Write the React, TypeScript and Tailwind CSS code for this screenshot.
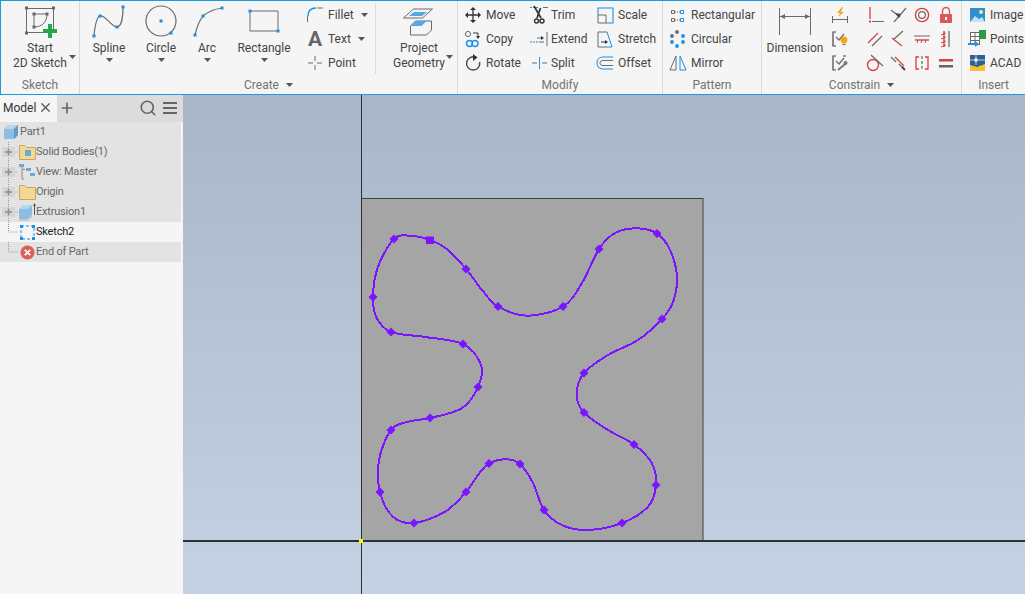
import type { ReactNode } from 'react';
import { Plus, Search, X } from 'lucide-react';

const BLUE = '#1b90e8';
const GRAY = '#6b6b6b';
const RED = '#d8403c';

const Caret = ({ className = '' }: { className?: string }) => (
  <svg width="7" height="4" viewBox="0 0 7 4" className={className}>
    <path d="M0 0h7L3.5 4z" fill="#555" />
  </svg>
);

// big ribbon icons are drawn in screen coordinates, cx = centre of the button
const BigIcon = ({ cx, children }: { cx: number; children: ReactNode }) => (
  <svg width="44" height="38" viewBox={`${cx - 22} 3 44 38`} fill="none" className="shrink-0">
    {children}
  </svg>
);

const Small = ({ children }: { children: ReactNode }) => (
  <svg width="20" height="20" viewBox="0 0 20 20" fill="none" className="shrink-0">
    {children}
  </svg>
);

const H = ({ x, y, s = 3, c = BLUE }: { x: number; y: number; s?: number; c?: string }) => (
  <rect x={x - s / 2} y={y - s / 2} width={s} height={s} fill={c} />
);

const BigButton = ({ w, icon, lines, caret, side }: { w: string; icon: ReactNode; lines: string[]; caret?: boolean; side?: string }) => (
  <div className={`${w} flex flex-col items-center shrink-0`}>
    {icon}
    <div className="relative flex flex-col items-center text-[12px] leading-[15px] text-[#444]">
      {lines.map((l) => (
        <span key={l} className="whitespace-nowrap">{l}</span>
      ))}
      {side && <Caret className={`absolute top-[14px] ${side}`} />}
    </div>
    {caret && <Caret className="mt-[2px]" />}
  </div>
);

const Row = ({ icon, label, iconW = 'w-5', gap = 'ml-[3px]', right }: { icon: ReactNode; label: string; iconW?: string; gap?: string; right?: ReactNode }) => (
  <div className="h-6 flex items-center">
    <div className={`${iconW} flex justify-center shrink-0`}>{icon}</div>
    <span className={`${gap} text-[12px] text-[#444] whitespace-nowrap`}>{label}</span>
    {right}
  </div>
);

const Panel = ({ w, label, arrow, border = true, children }: { w: string; label: string; arrow?: boolean; border?: boolean; children: ReactNode }) => (
  <section className={`${w} shrink-0 flex flex-col pt-[2px] ${border ? 'border-r border-[#d9d9d9]' : ''}`}>
    <div className="h-[72px] flex">{children}</div>
    <div className="h-[20px] pt-[1px] flex items-center justify-center gap-[7px] text-[12px] text-[#737373]">
      <span>{label}</span>
      {arrow && <Caret />}
    </div>
  </section>
);

/* ---------- small ribbon icons ---------- */
const icons: Record<string, ReactNode> = {
  fillet: (
    <>
      <path d="M2.5 17v-6" stroke={GRAY} />
      <path d="M3 11C3 6 6 3 11 3" stroke={BLUE} strokeWidth="1.4" />
      <path d="M12 3h6" stroke={GRAY} />
    </>
  ),
  point: <path d="M10 3v5M10 12v5M3 10h5M12 10h5" stroke={GRAY} />,
  move: (
    <>
      <path d="M10 3v14M3 10h14" stroke="#333" strokeWidth="1.3" />
      <path d="M10 2l-3 3h6zM10 18l-3-3h6zM2 10l3-3v6zM18 10l-3-3v6z" fill="#333" />
    </>
  ),
  copy: (
    <>
      <circle cx="5" cy="5" r="2.6" stroke={GRAY} />
      <path d="M10 4h5v4" stroke="#333" />
      <path d="M13 7l2 3 2-3z" fill="#333" />
      <circle cx="6.5" cy="14.5" r="3" stroke={BLUE} strokeWidth="1.4" />
      <circle cx="12" cy="14.5" r="3" stroke={BLUE} strokeWidth="1.4" />
    </>
  ),
  rotate: (
    <>
      <path d="M13 4.5A6.6 6.6 0 1 0 16.6 9" stroke="#444" strokeWidth="1.4" />
      <path d="M10 1v7l4.5-3.5z" fill="#333" />
    </>
  ),
  trim: (
    <>
      <path d="M1 2.5h9" stroke={BLUE} strokeDasharray="2 1" />
      <path d="M14 2.5h5" stroke={GRAY} />
      <path d="M5 1l7 12M11.5 3L8 13" stroke="#333" strokeWidth="1.7" />
      <circle cx="7.5" cy="16" r="2" stroke="#333" strokeWidth="1.4" />
      <circle cx="13" cy="16" r="2" stroke="#333" strokeWidth="1.4" />
    </>
  ),
  extend: (
    <>
      <path d="M1 13h8" stroke={BLUE} strokeDasharray="2 1" />
      <path d="M8 9h6M18 3v14M10 13h5" stroke={GRAY} />
      <path d="M12 7l3 2-3 2z" fill="#333" />
    </>
  ),
  split: (
    <>
      <path d="M3 10h5M13 10h5" stroke={GRAY} />
      <path d="M10.5 4v12" stroke={BLUE} />
    </>
  ),
  scale: (
    <>
      <path d="M3 10V3h15v15h-7" stroke={BLUE} strokeWidth="1.1" />
      <path d="M3 10h8v8H3z" stroke={GRAY} />
    </>
  ),
  stretch: (
    <>
      <path d="M12 3H3v15h9" stroke={GRAY} />
      <path d="M12 3l5 15h-5" stroke={BLUE} />
      <path d="M6 13h5" stroke="#333" />
      <path d="M10 11l3 2-3 2z" fill="#333" />
    </>
  ),
  offset: (
    <>
      <path d="M18 4H8C4 4 2 7 2 10s2 6 6 6h10" stroke={BLUE} strokeWidth="1.1" />
      <path d="M18 7.5H8c-2 0-3 1-3 2.5s1 2.5 3 2.5h10" stroke={GRAY} />
    </>
  ),
  rect: (
    <>
      <path d="M3.5 5.5h3v3h-3zM3.5 13.5h3v3h-3z" stroke={GRAY} />
      <path d="M12.5 5.5h3v3h-3zM12.5 13.5h3v3h-3z" stroke={BLUE} />
      <path d="M7 7h5M7 15h5" stroke={GRAY} strokeDasharray="1 1" />
    </>
  ),
  circular: (
    <>
      {[[9, 3], [4, 7], [15, 7], [4, 13], [15, 13], [9, 17]].map(([x, y], i) => (
        <circle key={i} cx={x} cy={y} r="1.9" fill={i < 2 ? GRAY : BLUE} />
      ))}
    </>
  ),
  mirror: (
    <>
      <path d="M8 3v14H2z" stroke={GRAY} />
      <path d="M12 3v14h6z" stroke={BLUE} />
    </>
  ),
  image: (
    <>
      <rect x="3" y="3" width="15" height="14" fill="#2f8fd0" />
      <path d="M3 17l5-6 4 3 3-2 3 5z" fill="#bfe0f5" />
      <circle cx="14" cy="7" r="2" fill="#f6e7a0" />
    </>
  ),
  points: (
    <>
      <rect x="3.5" y="3.5" width="9" height="12" fill="#fff" stroke={GRAY} />
      <path d="M3 7.5h9M3 11.5h9M8 3v12" stroke={GRAY} />
      <rect x="12" y="1" width="7" height="9" fill="#2e9a4a" />
      <path d="M1 15h9" stroke={BLUE} strokeWidth="2" />
      <path d="M8 12l4 3-4 3z" fill={BLUE} />
    </>
  ),
  acad: (
    <>
      <rect x="3" y="2" width="15" height="16" fill="#2f5f94" />
      <path d="M3 18v-6l7 2 8-3v7z" fill="#f2c230" />
      <path d="M3 7h15M9 2v10" stroke="#fff" strokeWidth=".7" />
      <rect x="7.5" y="5.5" width="3" height="3" fill="#fff" />
    </>
  ),
};

const constrainCol1: ReactNode[] = [
  <>
    <path d="M2.5 11v7M17.5 11v7M2 14.5h16" stroke={GRAY} />
    <path d="M12 2L7 8h3l-2 4 6-5h-3l2-5z" fill="#f0a818" />
  </>,
  <>
    <path d="M6 3H3v14h3" stroke="#444" strokeWidth="1.2" />
    <path d="M6 8l3 3 5-6" stroke={GRAY} strokeWidth="1.2" />
    <circle cx="14" cy="11" r="3.4" fill="#f0a818" />
    <path d="M12.5 15.5h3" stroke="#888" strokeWidth="1.4" />
  </>,
  <>
    <path d="M6 3H3v14h3M16 3h-3" stroke="#444" strokeWidth="1.2" />
    <path d="M6 8l3 3 5-6" stroke={GRAY} strokeWidth="1.2" />
    <path d="M8 17l7-6" stroke="#777" strokeWidth="2" />
    <circle cx="15.5" cy="10" r="2" fill="#777" />
  </>,
];

const constrainGrid: ReactNode[] = [
  <>
    <path d="M5 2v12" stroke={RED} strokeWidth="1.3" />
    <path d="M7 16.5h12" stroke={GRAY} />
    <rect x="4" y="15.5" width="2" height="2" fill={RED} />
  </>,
  <>
    <path d="M3 5l9 7" stroke={GRAY} strokeWidth="1.2" />
    <path d="M6 17L18 3" stroke={GRAY} strokeWidth="1.2" />
    <path d="M7 8l6 1-2 4z" fill="#444" />
  </>,
  <>
    <circle cx="10" cy="10" r="6.6" stroke={RED} strokeWidth="1.4" />
    <circle cx="10" cy="10" r="3.4" stroke={GRAY} strokeWidth="1.2" />
  </>,
  <>
    <rect x="4" y="9" width="12" height="9" rx="1" fill="#d9585a" />
    <path d="M6.5 9V6a3.5 3.5 0 0 1 7 0v3" stroke="#d9585a" strokeWidth="1.4" />
    <rect x="9" y="12" width="2" height="3" fill="#fff" />
  </>,
  <>
    <path d="M3 14L13 4" stroke={RED} strokeWidth="1.3" />
    <path d="M7 17L17 7" stroke={GRAY} strokeWidth="1.3" />
  </>,
  <>
    <path d="M4 9l10 8" stroke={RED} strokeWidth="1.3" />
    <path d="M6 10l9-8" stroke={GRAY} strokeWidth="1.3" />
  </>,
  <>
    <path d="M2 7h16" stroke={GRAY} />
    <path d="M3 11h14" stroke={RED} strokeWidth="1.4" />
    <path d="M5 14l1-3M9 14l1-3M13 14l1-3" stroke={RED} />
  </>,
  <>
    <path d="M13 2v16" stroke={GRAY} strokeWidth="1.3" />
    <path d="M8 2v16" stroke={RED} strokeWidth="1.4" />
    <path d="M5 6l5-2M5 10l5-2M5 14l5-2M5 18l5-2" stroke={RED} />
  </>,
  <>
    <circle cx="8" cy="12" r="5.5" stroke={RED} strokeWidth="1.4" />
    <path d="M6 2l12 11" stroke={GRAY} strokeWidth="1.3" />
  </>,
  <>
    <path d="M3 4l5 5M11 11l5 5" stroke={GRAY} strokeWidth="1.3" />
    <path d="M7 4l9 9" stroke={RED} strokeWidth="1.3" />
    <path d="M14 14l3 3" stroke="#444" strokeWidth="1.8" />
  </>,
  <>
    <path d="M7 4H4v12h3M13 4h3v12h-3" stroke={RED} strokeWidth="1.3" />
    <path d="M10 3v3M10 8v3M10 13v3" stroke={GRAY} strokeWidth="1.2" />
  </>,
  <>
    <rect x="3" y="6" width="14" height="2.5" fill={RED} />
    <rect x="3" y="12" width="14" height="2.5" fill="#666" />
  </>,
];

/* ---------- browser tree ---------- */
const Cube = () => (
  <svg width="16" height="16" viewBox="0 0 16 16">
    <path d="M1 5l4-4h10v10l-4 4H1z" fill="#8dbde0" />
    <path d="M5 1h10l-4 4H1z" fill="#b5d6ee" />
    <path d="M11 5l4-4v10l-4 4z" fill="#5f9ccb" />
  </svg>
);

const Folder = ({ cube }: { cube?: boolean }) => (
  <svg width="17" height="15" viewBox="0 0 17 15">
    <path d="M.5 14.5V.5h5l2 2h9v12z" fill="#f2d894" stroke="#c8a860" />
    {cube && <rect x="6" y="5" width="6" height="6" fill="#6ea8d6" />}
  </svg>
);

const treeIcons: Record<string, ReactNode> = {
  folderCube: <Folder cube />,
  folder: <Folder />,
  view: (
    <svg width="17" height="16" viewBox="0 0 17 16" fill="none">
      <rect x="0" y="0" width="5" height="3" fill="#6ea8d6" />
      <path d="M3 3v5" stroke="#888" strokeDasharray="2 1" />
      <path d="M3 8v7h2M6 5.5H3" stroke="#888" />
      <rect x="7" y="4" width="5" height="3" fill="#6ea8d6" />
      <rect x="11" y="9" width="5" height="3" fill="#6ea8d6" />
    </svg>
  ),
  extrusion: (
    <svg width="17" height="18" viewBox="0 0 17 18" fill="none">
      <path d="M0 6l4-4h9v10l-4 4H0z" fill="#8dbde0" />
      <path d="M4 2h9L9 6H0z" fill="#b5d6ee" />
      <path d="M0 16h9l4-4v2l-4 4H0z" fill="#c8c8c8" />
      <path d="M15.5 12V2" stroke="#555" />
      <path d="M14 3l1.5-3L17 3z" fill="#555" />
    </svg>
  ),
  sketch: (
    <svg width="15" height="15" viewBox="0 0 15 15" fill="none">
      <rect x="1" y="1" width="13" height="13" stroke={BLUE} strokeDasharray="3 2" />
      <path d="M0 0h3v3H0zM12 0h3v3h-3zM0 12h3v3H0zM12 12h3v3h-3z" fill={BLUE} />
    </svg>
  ),
  end: (
    <svg width="15" height="15" viewBox="0 0 15 15">
      <circle cx="7.5" cy="7.5" r="7" fill="#d9605c" />
      <path d="M4.8 4.8l5.4 5.4M10.2 4.8l-5.4 5.4" stroke="#fff" strokeWidth="1.8" />
    </svg>
  ),
};

const treeRows = [
  { label: 'Solid Bodies(1)', icon: 'folderCube', plus: true },
  { label: 'View: Master', icon: 'view', plus: true },
  { label: 'Origin', icon: 'folder', plus: true },
  { label: 'Extrusion1', icon: 'extrusion', plus: true },
  { label: 'Sketch2', icon: 'sketch', active: true },
  { label: 'End of Part', icon: 'end', last: true },
];

const TreeGutter = ({ plus, last }: { plus?: boolean; last?: boolean }) => (
  <svg width="18" height="20" viewBox="0 0 18 20" fill="none" className="shrink-0">
    <path d={last ? 'M8.5 0v10H18' : 'M8.5 0v20M8.5 10H18'} stroke="#999" strokeDasharray="1 1" />
    {plus && (
      <>
        <rect x="2" y="5" width="13" height="10" fill="#d6d6d6" />
        <path d="M8.5 6.5v7M5 10h7" stroke="#8c8c8c" strokeWidth="1.5" />
      </>
    )}
  </svg>
);

/* ---------- sketch profile on the canvas ---------- */
// x, y, and whether the point carries a fit-point marker
const profile: [number, number, boolean][] = [
  [430, 240, false], [448, 250, false], [466, 269, true], [482, 290, false], [498, 306.5, true],
  [528, 315.7, false], [563, 306.5, true], [582, 283, false], [599, 249, true], [615, 233, false],
  [637, 228.3, false], [657, 233.5, true], [670, 250, false], [677, 277, false], [673, 302, false],
  [662, 319, true], [638, 340, false], [608, 355, false], [584, 373, true], [576.7, 395, false],
  [584, 412.5, true], [608, 430, false], [634, 444.5, true], [651.7, 463, false], [656, 485, true],
  [648, 506.7, false], [622, 523, true], [588, 530, false], [561.7, 525, false], [544, 510, true],
  [533, 483, false], [520, 464, true], [506.7, 459.3, false], [489, 463.5, true], [478, 475, false],
  [466, 492, true], [445, 511.7, false], [414, 523, true], [393, 516.7, false], [380, 492, true],
  [379, 460, false], [391, 430, true], [408, 421.7, false], [430, 418, true], [461.7, 408.3, false],
  [478, 387, true], [481, 365, false], [463, 344, true], [425, 337, false], [391, 332, true],
  [376.7, 318, false], [373, 297, true], [378, 266.7, false], [394, 239, true], [410, 235.7, false],
];

// closed catmull-rom through the points
const splinePath = () => {
  const n = profile.length;
  let d = `M${profile[0][0]} ${profile[0][1]}`;
  for (let i = 0; i < n; i++) {
    const p0 = profile[(i + n - 1) % n];
    const p1 = profile[i];
    const p2 = profile[(i + 1) % n];
    const p3 = profile[(i + 2) % n];
    const c1x = p1[0] + (p2[0] - p0[0]) / 6;
    const c1y = p1[1] + (p2[1] - p0[1]) / 6;
    const c2x = p2[0] - (p3[0] - p1[0]) / 6;
    const c2y = p2[1] - (p3[1] - p1[1]) / 6;
    d += `C${c1x} ${c1y} ${c2x} ${c2y} ${p2[0]} ${p2[1]}`;
  }
  return d + 'Z';
};

const Ribbon = () => (
  <header className="h-[95px] shrink-0 flex bg-[#f5f5f5] border border-[#1b9be0] border-r-0">
    <Panel w="w-[79px]" label="Sketch">
      <BigButton
        w="w-full"
        lines={['Start', '2D Sketch']}
        side="right-[-9px]"
        icon={
          <BigIcon cx={39}>
            <path d="M25.5 8.5h27v24h-27z" stroke={GRAY} />
            <path d="M33 14v13M33 14h13c0 7-4 13-13 13" stroke={GRAY} />
            <H x={25.5} y={8} c="#666" />
            <H x={52.5} y={8} c="#666" />
            <H x={25.5} y={33} c="#666" />
            <H x={33} y={14} c="#666" />
            <H x={46} y={14} c="#666" />
            <H x={33} y={27} c="#666" />
            <path d="M47 24h4v5h5v4h-5v5h-4v-5h-5v-4h5z" fill="#22a84a" />
          </BigIcon>
        }
      />
    </Panel>

    <Panel w="w-[378px]" label="Create" arrow>
      <div className="flex w-full">
        <BigButton
          w="w-[46px] ml-[6px]"
          lines={['Spline']}
          caret
          icon={
            <BigIcon cx={109}>
              <path d="M94 36C95 25 97 17 100 16C106 15 111 27 117 27C121 27 123 18 123 7" stroke={GRAY} strokeWidth="1.2" />
              <H x={94} y={36} />
              <H x={100} y={16} />
              <H x={117} y={27} />
              <H x={123} y={7} />
            </BigIcon>
          }
        />
        <BigButton
          w="w-[46px] ml-[6px]"
          lines={['Circle']}
          caret
          icon={
            <BigIcon cx={161}>
              <circle cx="161" cy="21" r="15" stroke={GRAY} strokeWidth="1.2" />
              <H x={161} y={21} />
              <H x={171} y={33} />
            </BigIcon>
          }
        />
        <BigButton
          w="w-[40px] ml-[3px]"
          lines={['Arc']}
          caret
          icon={
            <BigIcon cx={207}>
              <path d="M195 35C197 26 200 20 203 16C209 11 215 9 222 8" stroke={GRAY} strokeWidth="1.2" />
              <H x={195} y={35} />
              <H x={203} y={16} />
              <H x={222} y={8} />
            </BigIcon>
          }
        />
        <BigButton
          w="w-[60px] ml-[7px]"
          lines={['Rectangle']}
          caret
          icon={
            <BigIcon cx={264}>
              <path d="M250 11h28v20h-28z" stroke={GRAY} />
              <H x={250} y={11} />
              <H x={278} y={31} />
            </BigIcon>
          }
        />
        <div className="ml-[11px] w-[70px] shrink-0">
          <Row icon={<Small>{icons.fillet}</Small>} label="Fillet" right={<Caret className="ml-[7px]" />} />
          <Row
            icon={<span className="text-[21px] leading-none font-bold text-[#666]">A</span>}
            label="Text"
            right={<Caret className="ml-[7px]" />}
          />
          <Row icon={<Small>{icons.point}</Small>} label="Point" />
        </div>
        <div className="w-px h-[71px] bg-[#dcdcdc] shrink-0" />
        <BigButton
          w="w-[70px] ml-[8px]"
          lines={['Project', 'Geometry']}
          side="right-[-8px]"
          icon={
            <BigIcon cx={419}>
              <path d="M403.5 18l10-9h19l-10 9z" stroke={GRAY} />
              <path d="M409 16l5-4h13l-5 4z" fill="#55a8e6" />
              <path d="M410.5 26l5-5h16v9l-5 5h-16z" fill="#f5f5f5" stroke={GRAY} />
              <path d="M410.5 26l5-5h11l-5 5z" fill="#55a8e6" />
            </BigIcon>
          }
        />
      </div>
    </Panel>

    <Panel w="w-[205px]" label="Modify">
      <div className="flex ml-[5px]">
        <div className="w-[66px]">
          <Row icon={<Small>{icons.move}</Small>} label="Move" />
          <Row icon={<Small>{icons.copy}</Small>} label="Copy" />
          <Row icon={<Small>{icons.rotate}</Small>} label="Rotate" />
        </div>
        <div className="w-[66px]">
          <Row icon={<Small>{icons.trim}</Small>} label="Trim" gap="ml-[2px]" />
          <Row icon={<Small>{icons.extend}</Small>} label="Extend" gap="ml-[2px]" />
          <Row icon={<Small>{icons.split}</Small>} label="Split" gap="ml-[2px]" />
        </div>
        <div>
          <Row icon={<Small>{icons.scale}</Small>} label="Scale" />
          <Row icon={<Small>{icons.stretch}</Small>} label="Stretch" />
          <Row icon={<Small>{icons.offset}</Small>} label="Offset" />
        </div>
      </div>
    </Panel>

    <Panel w="w-[99px]" label="Pattern">
      <div className="ml-[5px]">
        <Row icon={<Small>{icons.rect}</Small>} label="Rectangular" />
        <Row icon={<Small>{icons.circular}</Small>} label="Circular" />
        <Row icon={<Small>{icons.mirror}</Small>} label="Mirror" />
      </div>
    </Panel>

    <Panel w="w-[200px]" label="Constrain" arrow>
      <div className="flex w-full">
        <BigButton
          w="w-[66px]"
          lines={['Dimension']}
          icon={
            <BigIcon cx={795}>
              <path d="M779.5 8v27M810.5 8v27M780 16.5h30" stroke={GRAY} />
              <path d="M780 16.5l5-2.5v5zM810 16.5l-5-2.5v5z" fill={GRAY} />
            </BigIcon>
          }
        />
        <div className="w-[24px] shrink-0 flex flex-col items-center">
          {constrainCol1.map((c, i) => (
            <div key={i} className="h-6 flex items-center"><Small>{c}</Small></div>
          ))}
        </div>
        <div className="ml-[11px] grid grid-cols-[23px_23px_25px_24px] grid-rows-[24px_24px_24px] items-center justify-items-center">
          {constrainGrid.map((c, i) => (
            <Small key={i}>{c}</Small>
          ))}
        </div>
      </div>
    </Panel>

    <Panel w="w-[63px]" label="Insert" border={false}>
      <div className="ml-[5px]">
        <Row icon={<Small>{icons.image}</Small>} label="Image" gap="ml-[3px]" />
        <Row icon={<Small>{icons.points}</Small>} label="Points" gap="ml-[3px]" />
        <Row icon={<Small>{icons.acad}</Small>} label="ACAD" gap="ml-[3px]" />
      </div>
    </Panel>
  </header>
);

const Browser = () => (
  <aside className="w-[183px] shrink-0 bg-[#f5f5f5] flex flex-col text-[11px] tracking-[-0.2px]">
    <div className="h-[27px] pb-[2px] shrink-0 flex items-center bg-[#dcdcdc]">
      <div className="h-[27px] w-[57px] mb-[-2px] bg-[#f5f5f5] flex items-center pl-[3px] pb-[2px] text-[12px] tracking-normal text-[#333]">
        <span className="w-[35px]">Model</span>
        <X size={15} className="text-[#555]" />
      </div>
      <Plus size={16} strokeWidth={2.5} className="ml-[2px] text-[#666]" />
      <Search size={18} strokeWidth={2.2} className="ml-[64px] text-[#666]" />
      <div className="ml-[6px] w-[14px] flex flex-col gap-[3px]">
        <div className="h-[2px] bg-[#666]" />
        <div className="h-[2px] bg-[#666]" />
        <div className="h-[2px] bg-[#666]" />
      </div>
    </div>
    <div className="w-[181px]">
      <div className="h-5 flex items-center bg-[#e3e3e3] pl-[3px] text-[#666]">
        <Cube />
        <span className="ml-[1px]">Part1</span>
      </div>
      {treeRows.map((r) => (
        <div key={r.label} className={`h-5 flex items-center ${r.active ? 'bg-[#f5f5f5] text-[#222]' : 'bg-[#e3e3e3] text-[#666]'}`}>
          <TreeGutter plus={r.plus} last={r.last || r.active} />
          <div className="w-[18px] flex justify-center shrink-0">{treeIcons[r.icon]}</div>
          <span>{r.label}</span>
        </div>
      ))}
    </div>
  </aside>
);

const Canvas = () => (
  <main className="flex-1 min-w-0 bg-[linear-gradient(180deg,#a9b5c9_0%,#c5d2e4_100%)]">
    <svg width="842" height="499" viewBox="183 95 842 499" className="block">
      <rect x="361.5" y="198.5" width="341.5" height="342.5" fill="#a5a5a5" stroke="#3f4245" />
      <path d="M361.5 95V594" stroke="#2e3033" />
      <path d="M183 541H1025" stroke="#2e3033" strokeWidth="2" />
      <path d={splinePath()} stroke="#7b14ff" strokeWidth="2" fill="none" shapeRendering="crispEdges" />
      {profile.slice(1).filter((p) => p[2]).map(([x, y]) => (
        <path key={`${x}-${y}`} d={`M${x} ${y - 4.5}L${x + 4.5} ${y}L${x} ${y + 4.5}L${x - 4.5} ${y}Z`} fill="#7b14ff" />
      ))}
      <rect x="426" y="236.5" width="8" height="7.5" fill="#7b14ff" />
      <rect x="359" y="539" width="4" height="4" fill="#ffff00" />
    </svg>
  </main>
);

export default function App() {
  return (
    <div className="w-[1025px] h-[594px] overflow-hidden flex flex-col bg-[#f5f5f5] font-['Roboto','Liberation_Sans',sans-serif]">
      <Ribbon />
      <div className="flex-1 min-h-0 flex">
        <Browser />
        <Canvas />
      </div>
    </div>
  );
}
